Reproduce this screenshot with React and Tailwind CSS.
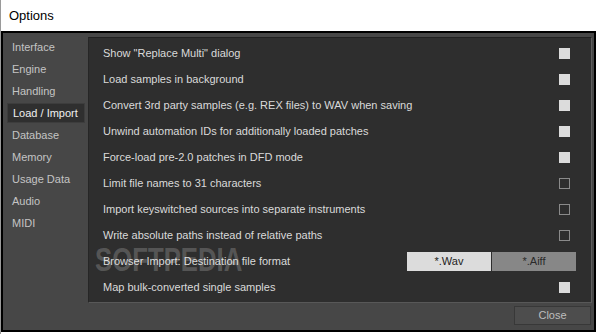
import React from "react";

const navItems = ["Interface","Engine","Handling","Load / Import","Database","Memory","Usage Data","Audio","MIDI"];

const rows = [
  { label: 'Show "Replace Multi" dialog', type: "on" },
  { label: "Load samples in background", type: "on" },
  { label: "Convert 3rd party samples (e.g. REX files) to WAV when saving", type: "on" },
  { label: "Unwind automation IDs for additionally loaded patches", type: "on" },
  { label: "Force-load pre-2.0 patches in DFD mode", type: "on" },
  { label: "Limit file names to 31 characters", type: "off" },
  { label: "Import keyswitched sources into separate instruments", type: "off" },
  { label: "Write absolute paths instead of relative paths", type: "off" },
  { label: "Browser Import: Destination file format", type: "seg" },
  { label: "Map bulk-converted single samples", type: "on" },
];

export default function App() {
  return (
    <div className="w-[596px] h-[334px] bg-white flex flex-col border-l border-[#9a9a9a] overflow-hidden relative" style={{ fontFamily: '"Liberation Sans", Arial, sans-serif' }}>
      <div className="h-[31px] flex items-center pl-[8px] text-[13px] text-black shrink-0">
        Options
      </div>
      <div className="flex-1 bg-[#474747] border-2 border-black flex flex-col mb-[2px] min-h-0">
        <div className="flex pt-[4px] pr-[2px]">
          <div className="w-[85px] shrink-0 flex flex-col pl-[4px] -mt-[1px]">
            {navItems.map((n) => (
              <div key={n} className="h-[22px] flex items-center">
                <div className={`w-[78px] h-[20px] flex items-center pl-[5px] text-[11px] ${n === "Load / Import" ? "bg-[#2f2f2f] text-[#f0f0f0] border border-[#3d3d3d]" : "text-[#c4c4c4]"}`}>
                  {n}
                </div>
              </div>
            ))}
          </div>
          <div className="flex-1 h-[266px] bg-[#2e2e2e] border border-t-[#202020] border-l-[#262626] border-b-[#585858] border-r-[#5e5e5e] pt-[2px] flex flex-col">
            {rows.map((r) => (
              <div key={r.label} className="h-[26px] flex items-center justify-between pl-[14px] pr-[15px]">
                <span className="text-[11px] text-[#dadada] whitespace-nowrap">{r.label}</span>
                {r.type === "seg" ? (
                  <div className="flex gap-[1px]">
                    <div className="w-[84px] h-[19px] bg-[#dcdcdc] text-[#222] text-[11px] flex items-center justify-center">*.Wav</div>
                    <div className="w-[84px] h-[19px] bg-[#878787] text-[#2a2a2a] text-[11px] flex items-center justify-center">*.Aiff</div>
                  </div>
                ) : r.type === "on" ? (
                  <div className="w-[11px] h-[11px] bg-[#dcdcdc] mr-[6px]" />
                ) : (
                  <div className="w-[11px] h-[11px] border border-[#8a8a8a] mr-[6px]" />
                )}
              </div>
            ))}
          </div>
        </div>
        <div className="flex justify-end pt-[3px] pr-[3px]">
          <div className="w-[77px] h-[19px] bg-[#4d4d4d] border border-[#383838] text-[#bdbdbd] text-[11px] flex items-center justify-center">Close</div>
        </div>
      </div>
      <div className="absolute left-[94px] top-[243px] flex items-start pointer-events-none">
        <span className="text-[33px] font-bold leading-none text-white/20 origin-left scale-x-[0.78] inline-block">SOFTPEDIA</span>
      </div>
    </div>
  );
}
